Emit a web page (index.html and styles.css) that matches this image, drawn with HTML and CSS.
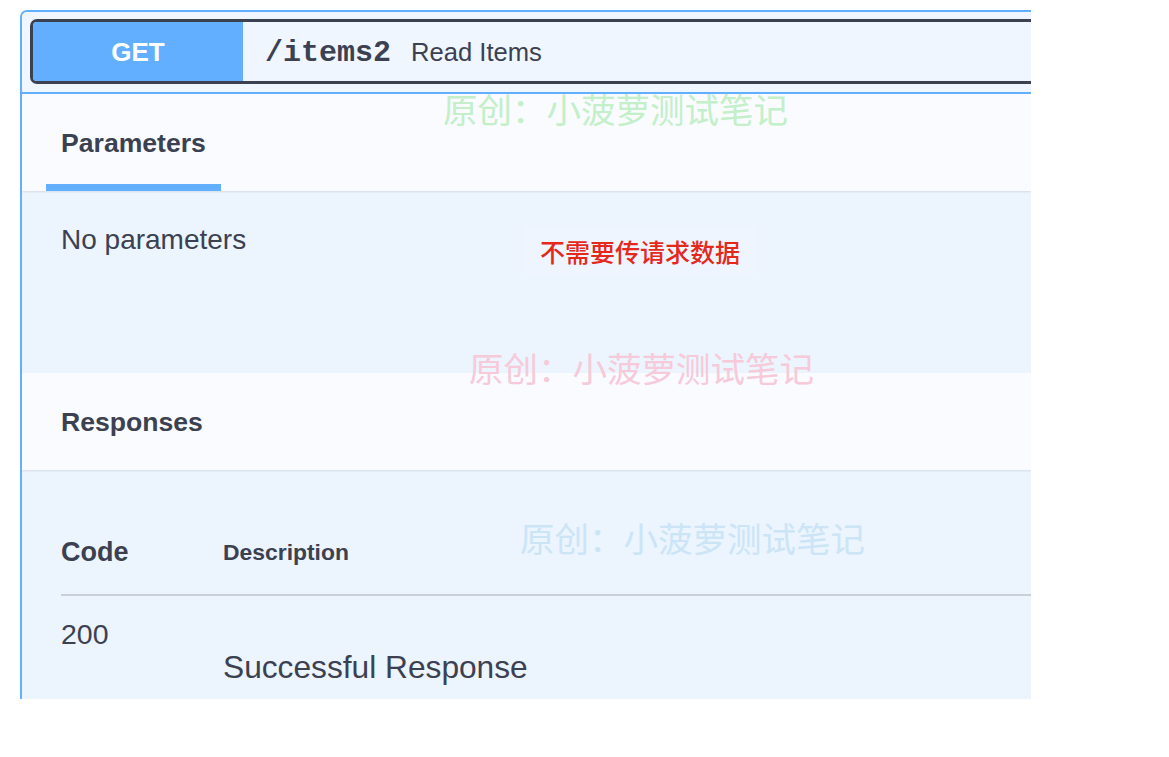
FILE: index.html
```html
<!DOCTYPE html>
<html lang="zh-CN">
<head>
    <meta charset="UTF-8">
    <meta name="viewport" content="width=device-width, initial-scale=1.0">
    <title>Read Items - API docs</title>
    <link rel="stylesheet" href="styles.css">
</head>
<body>
    <div class="page">
        <div class="opblock">
            <div class="summary">
                <div class="summary-box">
                    <span class="method">GET</span>
                    <span class="path">/items2</span>
                    <span class="summary-desc">Read Items</span>
                </div>
            </div>

            <div class="section-header tabs">
                <div class="tab active">
                    <h4>Parameters</h4>
                </div>
            </div>
            <div class="params-body">
                <p class="plain">No parameters</p>
            </div>

            <div class="section-header responses-header">
                <h4>Responses</h4>
            </div>
            <div class="responses-body">
                <div class="resp-head">
                    <div class="col-code">Code</div>
                    <div class="col-desc">Description</div>
                </div>
                <div class="resp-row">
                    <div class="status">200</div>
                    <div class="resp-text">Successful Response</div>
                </div>
            </div>

            <!-- annotations laid over the screenshot -->
            <div class="note">不需要传请求数据</div>
            <div class="mark mark-green">原创：小菠萝测试笔记</div>
            <div class="mark mark-pink">原创：小菠萝测试笔记</div>
            <div class="mark mark-blue">原创：小菠萝测试笔记</div>
        </div>
    </div>
</body>
</html>
```

FILE: styles.css
```css
body {
    margin: 0;
    padding: 0;
    background-color: #fff;
    font-family: "Liberation Sans", Arial, "Noto Sans CJK SC", sans-serif;
    color: #3b4151;
}
.page {
    padding: 10px 0 0 20px;
}
.opblock {
    position: relative;
    box-sizing: border-box;
    width: 1011px;
    height: 689px;
    border-top: 2px solid #61affe;
    border-left: 2px solid #61affe;
    border-radius: 7px 0 0 0;
    background-color: #ecf4fe;
    overflow: hidden;
}

/* summary bar */
.summary {
    padding: 7px 0 8px 8px;
    background-color: #eff6ff;
    border-bottom: 2px solid #61affe;
}
.summary-box {
    display: flex;
    align-items: center;
    box-sizing: border-box;
    width: 1040px;
    height: 65px;
    border: 3px solid #3b4151;
    border-radius: 7px;
    overflow: hidden;
}
.method {
    display: flex;
    align-items: center;
    justify-content: center;
    width: 210px;
    height: 100%;
    padding-top: 2px;
    box-sizing: border-box;
    background-color: #61affe;
    color: #fff;
    font-size: 26px;
    font-weight: bold;
}
.path {
    margin: 2px 0 0 22px;
    font-family: "Liberation Mono", "Courier New", monospace;
    font-size: 30px;
    font-weight: bold;
}
.summary-desc {
    margin: 2px 0 0 20px;
    font-size: 25.6px;
}

/* section headers */
.section-header {
    position: relative;
    display: flex;
    box-sizing: border-box;
    height: 97px;
    background-color: #f9fbff;
    box-shadow: 0 1px 2px rgba(0, 0, 0, 0.1);
}
.section-header h4 {
    margin: 0;
    font-size: 26.6px;
    font-weight: bold;
    line-height: 32px;
}
.tabs {
    align-items: flex-end;
    padding-left: 24px;
}
.tab {
    padding: 0 15px 25px;
    border-bottom: 7px solid #61affe;
}
.responses-header {
    align-items: center;
    padding-left: 39px;
}

/* parameters */
.params-body {
    height: 182px;
    box-sizing: border-box;
    padding: 33px 0 0 39px;
}
.plain {
    margin: 0;
    font-size: 28px;
    line-height: 32px;
}

/* responses table */
.responses-body {
    padding: 0 0 0 39px;
}
.resp-head {
    display: grid;
    grid-template-columns: 162px 1fr;
    align-items: center;
    padding: 66px 0 26px;
    border-bottom: 2px solid #cbd0d8;
    line-height: 32px;
    font-weight: bold;
}
.col-code {
    font-size: 27px;
}
.col-desc {
    font-size: 22.9px;
}
.resp-row {
    display: grid;
    grid-template-columns: 162px 1fr;
    padding-top: 22px;
}
.status {
    font-size: 28.5px;
    line-height: 32px;
}
.resp-text {
    margin-top: 31px;
    font-size: 31.7px;
    line-height: 36px;
}

/* annotations */
.note {
    position: absolute;
    left: 502px;
    top: 214px;
    padding: 9px 16px;
    background-color: rgba(255, 255, 255, 0.12);
    color: #e5281c;
    font-family: "Noto Sans CJK SC", sans-serif;
    font-size: 25px;
    font-weight: 500;
    line-height: 32px;
}
.mark {
    position: absolute;
    font-family: "Noto Sans CJK SC", sans-serif;
    font-size: 34.5px;
    line-height: 40px;
    white-space: nowrap;
}
.mark-green {
    left: 421px;
    top: 76px;
    color: #c3efc9;
}
.mark-pink {
    left: 447px;
    top: 335px;
    color: #f6cad9;
}
.mark-blue {
    left: 498px;
    top: 505px;
    color: #cbe5f7;
}
```
